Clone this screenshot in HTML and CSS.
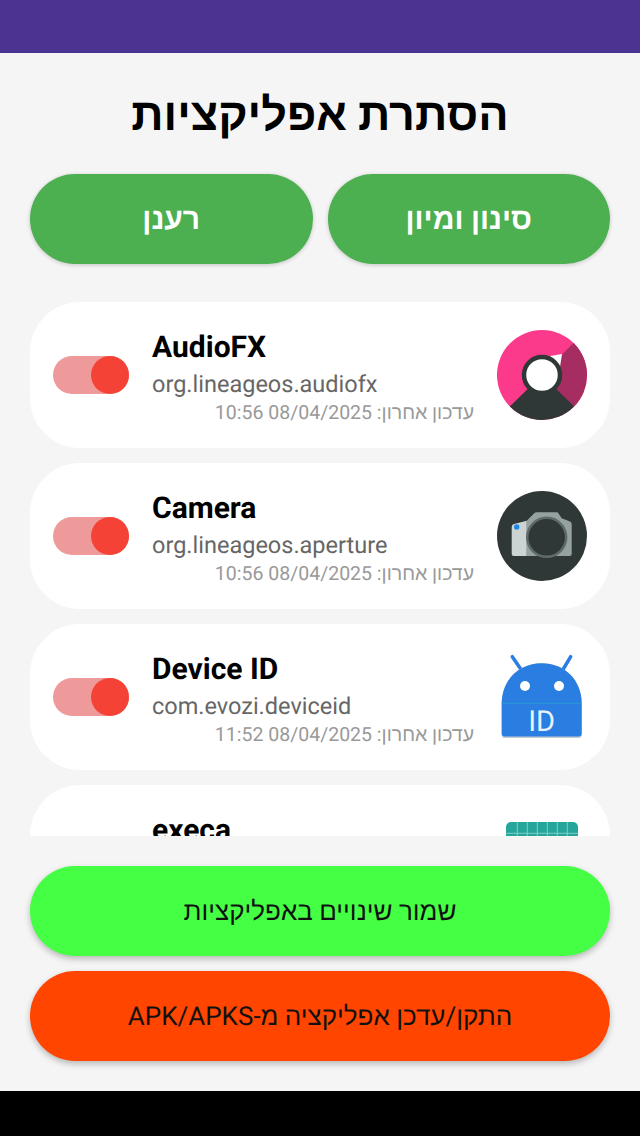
FILE: index.html
```html
<!DOCTYPE html>
<html lang="he" dir="rtl">
<head>
    <meta charset="UTF-8">
    <meta name="viewport" content="width=device-width, initial-scale=1.0">
    <title>הסתרת אפליקציות</title>
    <link rel="stylesheet" href="styles.css">
</head>
<body>
    <div class="pantalla">
        <div class="barra-superior"></div>

        <div class="contenido">
            <h1>הסתרת אפליקציות</h1>

            <div class="acciones">
                <button class="btn-verde">סינון ומיון</button>
                <button class="btn-verde">רענן</button>
            </div>

            <div class="lista">
                <div class="app">
                    <svg class="app-icono" viewBox="0 0 90 90">
                        <clipPath id="circulo-audio"><circle cx="45" cy="45" r="45"/></clipPath>
                        <g clip-path="url(#circulo-audio)">
                            <rect width="90" height="90" fill="#fb3a8c"/>
                            <path d="M45 45 L91 -2 H91 V91 Z" fill="#a52d62"/>
                            <path d="M45 45 L-1 90 H91 Z" fill="#2f3837"/>
                        </g>
                        <path d="M53 26 L65 24 L63 37 Z" fill="#fff"/>
                        <circle cx="45" cy="45" r="18" fill="#fff" stroke="#2f3837" stroke-width="4.5"/>
                    </svg>
                    <div class="app-info">
                        <div class="app-nombre" dir="ltr">AudioFX</div>
                        <div class="app-paquete" dir="ltr">org.lineageos.audiofx</div>
                        <div class="app-fecha">עדכון אחרון: 08/04/2025 10:56</div>
                    </div>
                    <div class="toggle"><span class="toggle-bola"></span></div>
                </div>

                <div class="app">
                    <svg class="app-icono" viewBox="0 0 90 90">
                        <circle cx="45" cy="45" r="45" fill="#2f3837"/>
                        <path d="M29.700 29.700 L37 22.500 Q38 21.300 40 21.300 H60 Q61 21.300 61.500 22.500 L64.700 27.300 L73 30.500 Q74.700 31.200 74.700 33 V63 Q74.700 65 72.700 65 H29.700 Z" fill="#95a2a0"/>
                        <path d="M29.700 29.700 L17 33 Q14.700 33.700 14.700 36 V63 Q14.700 65 16.700 65 H29.700 Z" fill="#cbd3d3"/>
                        <circle cx="49.700" cy="46.300" r="19.500" fill="#2f3837" stroke="#5f6b69" stroke-width="2.500"/>
                        <circle cx="19.700" cy="36" r="2.700" fill="#1e88e5"/>
                    </svg>
                    <div class="app-info">
                        <div class="app-nombre" dir="ltr">Camera</div>
                        <div class="app-paquete" dir="ltr">org.lineageos.aperture</div>
                        <div class="app-fecha">עדכון אחרון: 08/04/2025 10:56</div>
                    </div>
                    <div class="toggle"><span class="toggle-bola"></span></div>
                </div>

                <div class="app">
                    <svg class="app-icono" viewBox="0 0 90 90">
                        <path d="M15.300 4.700 L23.700 17 M73.700 4.700 L66.300 17" stroke="#2a7de1" stroke-width="3.500" stroke-linecap="round"/>
                        <path d="M4.700 53 C4.700 28 22 11.300 44.700 11.300 S84.700 28 84.700 53 V83 a3 3 0 0 1 -3 3 H7.700 a3 3 0 0 1 -3 -3 Z" fill="#c4cbd0"/>
                        <path d="M4.700 51.300 C4.700 28 22 11.300 44.700 11.300 S84.700 28 84.700 51.300 V81.500 a3 3 0 0 1 -3 3 H7.700 a3 3 0 0 1 -3 -3 Z" fill="#2a7de1"/>
                        <circle cx="28" cy="34" r="5" fill="#fff"/>
                        <circle cx="62" cy="34" r="5" fill="#fff"/>
                        <path d="M4.700 51.300 H84.700" stroke="#2a9bd8" stroke-width="1"/>
                        <text class="icono-id" x="44.700" y="79" text-anchor="middle" direction="ltr">ID</text>
                    </svg>
                    <div class="app-info">
                        <div class="app-nombre" dir="ltr">Device ID</div>
                        <div class="app-paquete" dir="ltr">com.evozi.deviceid</div>
                        <div class="app-fecha">עדכון אחרון: 08/04/2025 11:52</div>
                    </div>
                    <div class="toggle"><span class="toggle-bola"></span></div>
                </div>

                <div class="app">
                    <svg class="app-icono" viewBox="0 0 90 90">
                        <rect x="9" y="9" width="72" height="72" rx="5" fill="#26a69a"/>
                        <path d="M20.300 9 V81 M30.300 9 V81 M40.300 9 V81 M50.300 9 V81 M60.300 9 V81 M70.300 9 V81 M9 20.300 H81" stroke="#7fcdc5" stroke-width="1"/>
                    </svg>
                    <div class="app-info">
                        <div class="app-nombre" dir="ltr">execa</div>
                        <div class="app-paquete" dir="ltr">&nbsp;</div>
                        <div class="app-fecha">&nbsp;</div>
                    </div>
                    <div class="toggle"><span class="toggle-bola"></span></div>
                </div>
            </div>

            <div class="pie">
                <button class="btn-grande btn-guardar">שמור שינויים באפליקציות</button>
                <button class="btn-grande btn-instalar">התקן/עדכן אפליקציה מ-APK/APKS</button>
            </div>
        </div>

        <div class="barra-inferior"></div>
    </div>
</body>
</html>
```

FILE: styles.css
```css
body {
    margin: 0;
    font-family: Roboto, "Liberation Sans", sans-serif;
    text-rendering: geometricPrecision;
    overflow: hidden;
}

.pantalla {
    display: flex;
    flex-direction: column;
    height: 1136px;
    background-color: #f5f5f5;
}

.barra-superior {
    height: 53px;
    background-color: #4b3392;
}

.barra-inferior {
    height: 45px;
    background-color: #000;
}

.contenido {
    flex: 1;
    display: flex;
    flex-direction: column;
    min-height: 0;
}

h1 {
    margin: 30px 0 0;
    height: 91px;
    line-height: 64px;
    text-align: center;
    font-size: 45px;
    font-weight: bold;
    color: #000;
}

.acciones {
    display: flex;
    gap: 15px;
    padding: 0 30px;
}

button {
    border: none;
    font-family: inherit;
    text-rendering: inherit;
}

.btn-verde {
    flex: 1;
    height: 90px;
    border-radius: 45px;
    background-color: #4caf50;
    color: white;
    font-size: 30px;
    font-weight: bold;
    box-shadow: 0 1px 4px rgba(0,0,0,0.2);
}

.lista {
    flex: 1;
    min-height: 0;
    overflow: hidden;
    margin-top: 38px;
    padding: 0 30px;
}

.app {
    display: flex;
    align-items: center;
    gap: 23px;
    height: 146px;
    box-sizing: border-box;
    margin-bottom: 15px;
    padding: 0 23px;
    background-color: white;
    border-radius: 50px;
}

.app-icono {
    flex: none;
    width: 90px;
    height: 90px;
}

.icono-id {
    font-family: Roboto, sans-serif;
    font-size: 29px;
    fill: #e8f1fc;
}

.app-info {
    flex: 1;
    min-width: 0;
    padding-top: 4px;
}

.app-nombre {
    height: 37px;
    line-height: 35px;
    font-size: 30px;
    font-weight: bold;
    color: #000;
    text-align: left;
}

.app-paquete {
    height: 35px;
    line-height: 35px;
    font-size: 23.5px;
    color: #666;
    text-align: left;
}

.app-fecha {
    height: 22px;
    line-height: 22px;
    font-size: 19.5px;
    color: #999;
}

.toggle {
    flex: none;
    width: 76px;
    height: 38px;
    border-radius: 19px;
    background-color: #ef9a9a;
    display: flex;
    justify-content: flex-start;
}

.toggle-bola {
    width: 38px;
    height: 38px;
    border-radius: 50%;
    background-color: #f44336;
}

.pie {
    display: flex;
    flex-direction: column;
    gap: 15px;
    padding: 30px;
}

.btn-grande {
    height: 90px;
    border-radius: 45px;
    color: #111;
    font-size: 26px;
    box-shadow: 0 3px 6px rgba(0,0,0,0.25);
}

.btn-guardar {
    background-color: #44ff44;
}

.btn-instalar {
    background-color: #ff4500;
}
```
